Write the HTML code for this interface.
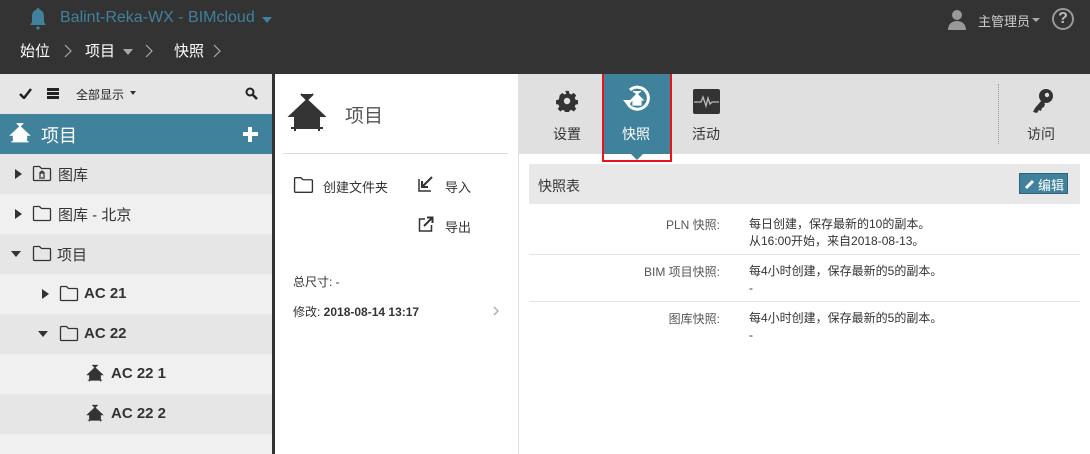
<!DOCTYPE html>
<html><head><meta charset="utf-8"><style>
*{margin:0;padding:0;box-sizing:border-box}
html,body{width:1090px;height:454px;overflow:hidden}
body{position:relative;background:#fff;font-family:"Liberation Sans","Noto Sans CJK SC",sans-serif;color:#333;font-size:13px}
.a{position:absolute}
.row{position:absolute;left:0;width:272px;height:40px}
.t{position:absolute;white-space:nowrap}
.tri{position:absolute;width:0;height:0}
.r{border-top:5px solid transparent;border-bottom:5px solid transparent;border-left:7px solid #333}
.d{border-left:5px solid transparent;border-right:5px solid transparent;border-top:6px solid #333}
</style></head><body>
<!-- header -->
<div class="a" style="left:0;top:0;width:1090px;height:74px;background:#333"></div>
<svg class="a" style="left:28px;top:7px" width="20" height="24" viewBox="0 0 20 24"><path d="M10 1c1 0 1.5.8 1.5 1.6C14.5 3.5 16 6 16 9v6l2 3H2l2-3V9c0-3 1.5-5.5 4.5-6.4C8.5 1.8 9 1 10 1z" fill="#40819c"/><circle cx="10" cy="21" r="1.6" fill="#40819c"/></svg>
<div class="t" style="left:60px;top:9px;font-size:16px;color:#40819c">Balint-Reka-WX - BIMcloud</div>
<div class="tri d" style="left:262px;top:17px;border-top-color:#40819c"></div>
<div class="t" style="left:20px;top:40px;font-size:15px;color:#fff">始位</div>
<svg class="a" style="left:64px;top:44px" width="8" height="14"><path d="M1 1l6 6-6 6" fill="none" stroke="#aaa" stroke-width="1.2"/></svg>
<div class="t" style="left:85px;top:40px;font-size:15px;color:#fff">项目</div>
<div class="tri d" style="left:123px;top:49px;border-top-color:#aaa"></div>
<svg class="a" style="left:145px;top:44px" width="8" height="14"><path d="M1 1l6 6-6 6" fill="none" stroke="#aaa" stroke-width="1.2"/></svg>
<div class="t" style="left:174px;top:40px;font-size:15px;color:#fff">快照</div>
<svg class="a" style="left:213px;top:44px" width="8" height="14"><path d="M1 1l6 6-6 6" fill="none" stroke="#aaa" stroke-width="1.2"/></svg>
<svg class="a" style="left:947px;top:9px" width="20" height="21" viewBox="0 0 20 21"><circle cx="10" cy="6" r="5" fill="#999"/><path d="M1 21c0-6 4-9 9-9s9 3 9 9z" fill="#999"/></svg>
<div class="t" style="left:978px;top:11px;font-size:13px;color:#ccc">主管理员</div>
<div class="tri d" style="left:1032px;top:18px;border-top-color:#aaa;border-width:4px 4px 0"></div>
<div class="a" style="left:1052px;top:8px;width:22px;height:22px;border:2px solid #999;border-radius:50%;color:#bbb;font-size:16px;font-weight:bold;text-align:center;line-height:18px">?</div>
<!-- left -->
<div class="a" style="left:0;top:74px;width:272px;height:40px;background:#e6e6e6"></div>
<svg class="a" style="left:19px;top:88px" width="13" height="11"><path d="M1 6l4 4 7-9" fill="none" stroke="#222" stroke-width="2.5"/></svg>
<div class="a" style="left:47px;top:88px;width:12px;height:3px;background:#222;box-shadow:0 4px 0 #222,0 8px 0 #222"></div>
<div class="t" style="left:76px;top:86px;font-size:12px;color:#222">全部显示</div>
<div class="tri d" style="left:130px;top:91px;border-width:4px 3px 0;border-top-color:#333"></div>
<svg class="a" style="left:245px;top:87px" width="13" height="13" viewBox="0 0 13 13"><circle cx="5" cy="5" r="3.5" fill="none" stroke="#222" stroke-width="2"/><path d="M8 8l4 4" stroke="#222" stroke-width="2.5"/></svg>
<div class="a" style="left:0;top:114px;width:272px;height:40px;background:#40819c"></div>
<svg class="a" style="left:9px;top:121px" width="22" height="24" viewBox="0 0 40 40"><path d="M14 2l6 6 6-6M20 8L3 24h5v11h24V24h5z" fill="#fff" stroke="#fff" stroke-width="2"/><path d="M4 36h32" stroke="#fff" stroke-width="2"/></svg>
<div class="t" style="left:41px;top:122px;font-size:18px;color:#fff">项目</div>
<div class="a" style="left:243px;top:132px;width:15px;height:4px;background:#fff"></div>
<div class="a" style="left:248px;top:127px;width:4px;height:15px;background:#fff"></div>
<div class="row" style="top:154px;background:#e6e6e6"></div>
<div class="row" style="top:194px;background:#f0f0f0"></div>
<div class="row" style="top:234px;background:#e6e6e6"></div>
<div class="row" style="top:274px;background:#f0f0f0"></div>
<div class="row" style="top:314px;background:#e6e6e6"></div>
<div class="row" style="top:354px;background:#f0f0f0"></div>
<div class="row" style="top:394px;background:#e6e6e6"></div>
<div class="row" style="top:434px;background:#f0f0f0"></div>
<div class="a" style="left:272px;top:74px;width:3px;height:380px;background:#333"></div>
<!-- tree -->
<div class="tri r" style="left:15px;top:169px"></div>
<svg class="a" style="left:32px;top:165px" width="20" height="17" viewBox="0 0 20 17"><path d="M1.5 2.5q0-1 1-1h5l2 2h8q1 0 1 1v10q0 1-1 1h-15q-1 0-1-1z" fill="none" stroke="#333" stroke-width="1.3"/><path d="M7 13h6M8 12V8h4v4M7.5 8l2.5-2 2.5 2" fill="none" stroke="#333" stroke-width="1.2"/></svg>
<div class="t" style="left:58px;top:164px;font-size:15px">图库</div>
<div class="tri r" style="left:15px;top:209px"></div>
<svg class="a" style="left:32px;top:205px" width="20" height="17" viewBox="0 0 20 17"><path d="M1.5 2.5q0-1 1-1h5l2 2h8q1 0 1 1v10q0 1-1 1h-15q-1 0-1-1z" fill="none" stroke="#333" stroke-width="1.3"/></svg>
<div class="t" style="left:58px;top:204px;font-size:15px">图库 - 北京</div>
<div class="tri d" style="left:11px;top:251px"></div>
<svg class="a" style="left:32px;top:245px" width="20" height="17" viewBox="0 0 20 17"><path d="M1.5 2.5q0-1 1-1h5l2 2h8q1 0 1 1v10q0 1-1 1h-15q-1 0-1-1z" fill="none" stroke="#333" stroke-width="1.3"/></svg>
<div class="t" style="left:57px;top:244px;font-size:15px">项目</div>
<div class="tri r" style="left:42px;top:289px"></div>
<svg class="a" style="left:59px;top:285px" width="20" height="17" viewBox="0 0 20 17"><path d="M1.5 2.5q0-1 1-1h5l2 2h8q1 0 1 1v10q0 1-1 1h-15q-1 0-1-1z" fill="none" stroke="#333" stroke-width="1.3"/></svg>
<div class="t" style="left:84px;top:285px;font-size:15px;font-weight:bold">AC 21</div>
<div class="tri d" style="left:38px;top:331px"></div>
<svg class="a" style="left:59px;top:325px" width="20" height="17" viewBox="0 0 20 17"><path d="M1.5 2.5q0-1 1-1h5l2 2h8q1 0 1 1v10q0 1-1 1h-15q-1 0-1-1z" fill="none" stroke="#333" stroke-width="1.3"/></svg>
<div class="t" style="left:84px;top:325px;font-size:15px;font-weight:bold">AC 22</div>
<svg class="a" style="left:86px;top:364px" width="18" height="18" viewBox="0 0 40 40"><path d="M14 2l6 6 6-6M20 8L3 24h5v11h24V24h5z" fill="#333" stroke="#333" stroke-width="2"/><path d="M4 36h32M8 36v3M32 36v3" stroke="#333" stroke-width="2"/></svg>
<div class="t" style="left:111px;top:365px;font-size:15px;font-weight:bold">AC 22 1</div>
<svg class="a" style="left:86px;top:404px" width="18" height="18" viewBox="0 0 40 40"><path d="M14 2l6 6 6-6M20 8L3 24h5v11h24V24h5z" fill="#333" stroke="#333" stroke-width="2"/><path d="M4 36h32M8 36v3M32 36v3" stroke="#333" stroke-width="2"/></svg>
<div class="t" style="left:111px;top:405px;font-size:15px;font-weight:bold">AC 22 2</div>
<!-- middle -->
<svg class="a" style="left:287px;top:92px" width="40" height="40" viewBox="0 0 40 40"><path d="M14 2l6 6 6-6M20 8L3 24h5v11h24V24h5z" fill="#333" stroke="#333" stroke-width="2"/><path d="M4 36h32M8 36v3M32 36v3" stroke="#333" stroke-width="2"/></svg>
<div class="t" style="left:345px;top:101px;font-size:19px;color:#555">项目</div>
<div class="a" style="left:283px;top:153px;width:225px;height:1px;background:#ddd"></div>
<svg class="a" style="left:293px;top:176px" width="21" height="18" viewBox="0 0 20 17"><path d="M1.5 2.5q0-1 1-1h5l2 2h8q1 0 1 1v10q0 1-1 1h-15q-1 0-1-1z" fill="none" stroke="#333" stroke-width="1.3"/></svg>
<div class="t" style="left:323px;top:177px;font-size:13px">创建文件夹</div>
<svg class="a" style="left:418px;top:176px" width="16" height="16" viewBox="0 0 16 16"><path d="M1 3v12h12" fill="none" stroke="#333" stroke-width="1.5"/><path d="M14 1L5 10M4 5v6h6" fill="none" stroke="#333" stroke-width="2"/></svg>
<div class="t" style="left:445px;top:177px;font-size:13px">导入</div>
<svg class="a" style="left:418px;top:216px" width="16" height="16" viewBox="0 0 16 16"><path d="M7 3H1.5v12h12V9" fill="none" stroke="#333" stroke-width="1.5"/><path d="M6 10L14 2M9 1.5h5.5V7" fill="none" stroke="#333" stroke-width="2"/></svg>
<div class="t" style="left:445px;top:217px;font-size:13px">导出</div>
<div class="t" style="left:293px;top:273px;font-size:12px">总尺寸: -</div>
<div class="t" style="left:293px;top:303px;font-size:12px">修改: <b>2018-08-14 13:17</b></div>
<svg class="a" style="left:493px;top:306px" width="6" height="10"><path d="M1 1l4 4-4 4" fill="none" stroke="#aaa" stroke-width="1.3"/></svg>
<div class="a" style="left:518px;top:74px;width:1px;height:380px;background:#e0e0e0"></div>
<!-- right toolbar -->
<div class="a" style="left:519px;top:74px;width:571px;height:80px;background:#e0e0e0"></div>
<svg class="a" style="left:556px;top:90px" width="22" height="22" viewBox="0 0 24 24"><path d="M10 1h4l.6 3 2.2.9 2.5-1.7 2.8 2.8-1.7 2.5.9 2.2 3 .6v4l-3 .6-.9 2.2 1.7 2.5-2.8 2.8-2.5-1.7-2.2.9-.6 3h-4l-.6-3-2.2-.9-2.5 1.7-2.8-2.8 1.7-2.5-.9-2.2-3-.6v-4l3-.6.9-2.2L3.9 6l2.8-2.8 2.5 1.7 2.2-.9z" fill="#333"/><circle cx="12" cy="12" r="3.5" fill="#e0e0e0"/></svg>
<div class="t" style="left:553px;top:124px;font-size:14px">设置</div>
<div class="a" style="left:602px;top:74px;width:70px;height:88px;border:2px solid #e8141b;background:#fff"></div>
<div class="a" style="left:604px;top:74px;width:66px;height:80px;background:#40819c"></div>
<div class="a" style="left:631px;top:154px;width:0;height:0;border:6px solid transparent;border-top-color:#40819c;border-bottom:0"></div>
<svg class="a" style="left:620px;top:84px" width="34" height="30" viewBox="0 0 34 30"><path d="M8 20A11 11 0 1 0 10 6" fill="none" stroke="#fff" stroke-width="3"/><path d="M3 16l5 6 5-6z" fill="#fff"/><path d="M13 7l4 3 4-3M17 10l-6 6h2v5h8v-5h2z" fill="#fff" stroke="#fff" stroke-width="1.2"/></svg>
<div class="t" style="left:622px;top:124px;font-size:14px;color:#fff">快照</div>
<div class="a" style="left:693px;top:89px;width:27px;height:25px;background:#333;border-radius:2px"></div>
<svg class="a" style="left:693px;top:89px" width="27" height="25"><path d="M1 13h7l2-5 3 9 2-8 2 6 2-2h7" fill="none" stroke="#bbb" stroke-width="1.3"/></svg>
<div class="t" style="left:692px;top:124px;font-size:14px">活动</div>
<div class="a" style="left:998px;top:84px;width:0;height:60px;border-left:1px dotted #999"></div>
<svg class="a" style="left:1031px;top:88px" width="24" height="26" viewBox="0 0 24 26"><circle cx="15" cy="8" r="7" fill="#333"/><circle cx="16" cy="7" r="2.2" fill="#e0e0e0"/><path d="M11 12L4 20l-2 4 4 1 2-3 2 1 1-3 2-1 1-3z" fill="#333"/></svg>
<div class="t" style="left:1027px;top:124px;font-size:14px">访问</div>
<!-- table -->
<div class="a" style="left:529px;top:164px;width:551px;height:40px;background:#e8e8e8"></div>
<div class="t" style="left:538px;top:176px;font-size:14px">快照表</div>
<div class="a" style="left:1019px;top:173px;width:49px;height:21px;background:#40819c;border:1px solid #2d6278"></div>
<svg class="a" style="left:1024px;top:178px" width="12" height="12"><path d="M2 10l7-7" stroke="#fff" stroke-width="3"/></svg>
<div class="t" style="left:1038px;top:175px;font-size:13px;color:#fff">编辑</div>
<div class="t" style="left:600px;top:216px;width:120px;text-align:right;font-size:12px;color:#555">PLN 快照:</div>
<div class="t" style="left:749px;top:216px;font-size:12px;line-height:17px">每日创建，保存最新的10的副本。<br>从16:00开始，来自2018-08-13。</div>
<div class="a" style="left:529px;top:254px;width:551px;height:1px;background:#e4e4e4"></div>
<div class="t" style="left:580px;top:263px;width:140px;text-align:right;font-size:12px;color:#555">BIM 项目快照:</div>
<div class="t" style="left:749px;top:263px;font-size:12px;line-height:17px">每4小时创建，保存最新的5的副本。<br>-</div>
<div class="a" style="left:529px;top:301px;width:551px;height:1px;background:#e4e4e4"></div>
<div class="t" style="left:580px;top:310px;width:140px;text-align:right;font-size:12px;color:#555">图库快照:</div>
<div class="t" style="left:749px;top:310px;font-size:12px;line-height:17px">每4小时创建，保存最新的5的副本。<br>-</div>
</body></html>
